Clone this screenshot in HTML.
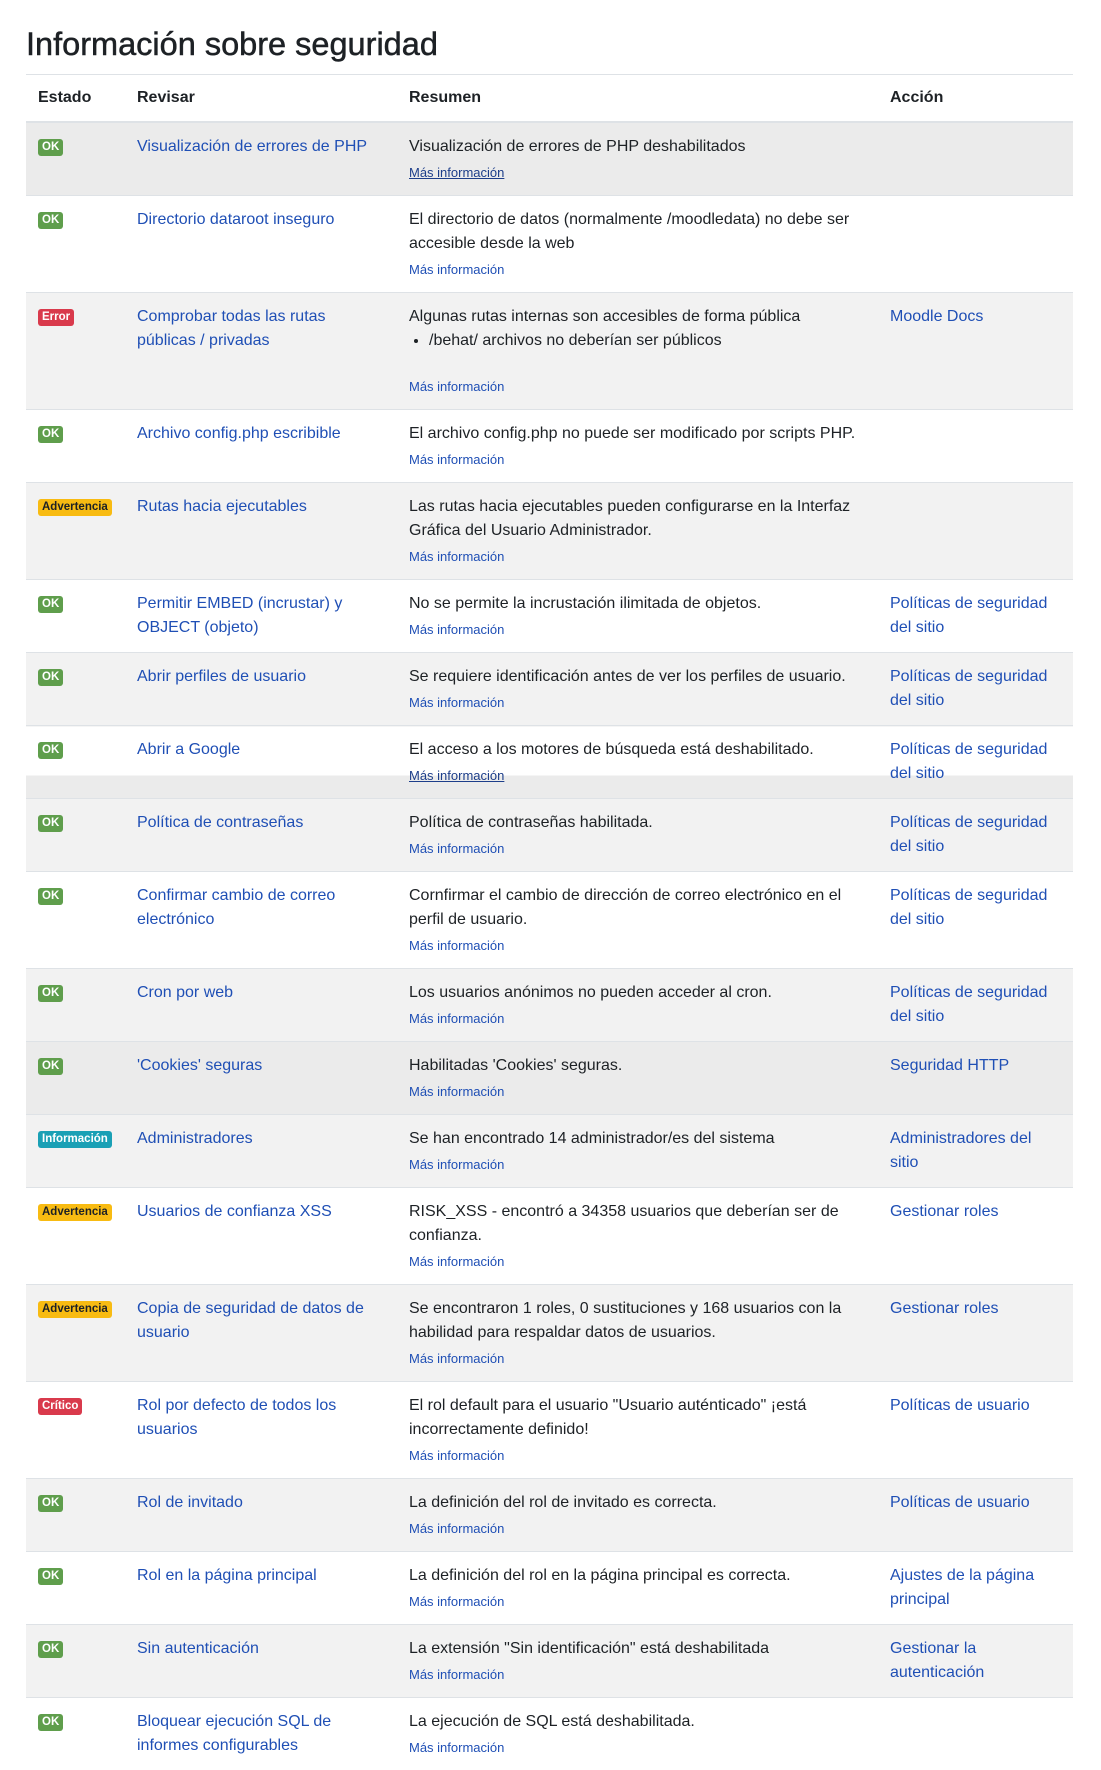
<!DOCTYPE html>
<html><head><meta charset="utf-8">
<style>
html,body{margin:0;padding:0;background:#fff;}
body{width:1101px;height:1764px;overflow:hidden;font-family:"Liberation Sans",Arial,sans-serif;color:#1d2125;font-size:16px;}
h2{margin:0;position:absolute;left:26px;top:24px;font-size:32.5px;font-weight:normal;line-height:40px;-webkit-text-stroke:0.5px #1d2125;color:#1d2125;}
table{position:absolute;left:26px;top:74px;width:1047px;border-collapse:collapse;table-layout:fixed;}
th,td{padding:12px 12px;text-align:left;vertical-align:top;line-height:24px;}
th{padding:11px 12px;font-weight:bold;border-top:1px solid #dee2e6;border-bottom:2px solid #dee2e6;font-size:16px;}
td{border-top:1px solid #dee2e6;}
tr.g td{background:#f2f2f2;}
tr.h td{background:#ebebeb;}
a{color:#1f4fb5;text-decoration:none;white-space:nowrap;}
.m{display:block;font-size:13px;line-height:20px;margin-top:4px;color:#1f4fb5;}
.mu{color:#1d3e8a;text-decoration:underline;}
.b{display:inline-block;font-size:11.5px;font-weight:bold;line-height:17px;padding:0 4px;border-radius:3px;color:#fff;margin-top:4px;vertical-align:top;}
.ok{background:#5f9e4c;}
.er{background:#d93a4c;}
.wa{background:#f8bb12;color:#1d2125;}
.in{background:#1aa0b5;}
ul{margin:0 0 24px 0;padding-left:20px;}
</style></head><body>
<h2>Información sobre seguridad</h2>
<table>
<colgroup><col style="width:99px"><col style="width:272px"><col style="width:481px"><col style="width:195px"></colgroup>
<tr><th>Estado</th><th>Revisar</th><th>Resumen</th><th>Acción</th></tr>
<tr class="h"><td><span class="b ok">OK</span></td><td><a>Visualización de errores de PHP</a></td><td>Visualización de errores de PHP deshabilitados<a class="m mu">Más información</a></td><td></td></tr>
<tr><td><span class="b ok">OK</span></td><td><a>Directorio dataroot inseguro</a></td><td>El directorio de datos (normalmente /moodledata) no debe ser<br>accesible desde la web<a class="m">Más información</a></td><td></td></tr>
<tr class="g"><td><span class="b er">Error</span></td><td><a>Comprobar todas las rutas<br>públicas / privadas</a></td><td>Algunas rutas internas son accesibles de forma pública<ul><li>/behat/ archivos no deberían ser públicos</li></ul><a class="m">Más información</a></td><td><a>Moodle Docs</a></td></tr>
<tr><td><span class="b ok">OK</span></td><td><a>Archivo config.php escribible</a></td><td>El archivo config.php no puede ser modificado por scripts PHP.<a class="m">Más información</a></td><td></td></tr>
<tr class="g"><td><span class="b wa">Advertencia</span></td><td><a>Rutas hacia ejecutables</a></td><td>Las rutas hacia ejecutables pueden configurarse en la Interfaz<br>Gráfica del Usuario Administrador.<a class="m">Más información</a></td><td></td></tr>
<tr><td><span class="b ok">OK</span></td><td><a>Permitir EMBED (incrustar) y<br>OBJECT (objeto)</a></td><td>No se permite la incrustación ilimitada de objetos.<a class="m">Más información</a></td><td><a>Políticas de seguridad<br>del sitio</a></td></tr>
<tr class="g"><td><span class="b ok">OK</span></td><td><a>Abrir perfiles de usuario</a></td><td>Se requiere identificación antes de ver los perfiles de usuario.<a class="m">Más información</a></td><td><a>Políticas de seguridad<br>del sitio</a></td></tr>
<tr class="p"><td style="background:linear-gradient(#fff 0 49px,#ebebeb 49px)"><span class="b ok">OK</span></td><td style="background:linear-gradient(#fff 0 49px,#ebebeb 49px)"><a>Abrir a Google</a></td><td style="background:linear-gradient(#fff 0 49px,#ebebeb 49px)">El acceso a los motores de búsqueda está deshabilitado.<a class="m mu">Más información</a></td><td style="background:linear-gradient(#fff 0 49px,#ebebeb 49px)"><a>Políticas de seguridad<br>del sitio</a></td></tr>
<tr class="g"><td><span class="b ok">OK</span></td><td><a>Política de contraseñas</a></td><td>Política de contraseñas habilitada.<a class="m">Más información</a></td><td><a>Políticas de seguridad<br>del sitio</a></td></tr>
<tr><td><span class="b ok">OK</span></td><td><a>Confirmar cambio de correo<br>electrónico</a></td><td>Cornfirmar el cambio de dirección de correo electrónico en el<br>perfil de usuario.<a class="m">Más información</a></td><td><a>Políticas de seguridad<br>del sitio</a></td></tr>
<tr class="g"><td><span class="b ok">OK</span></td><td><a>Cron por web</a></td><td>Los usuarios anónimos no pueden acceder al cron.<a class="m">Más información</a></td><td><a>Políticas de seguridad<br>del sitio</a></td></tr>
<tr class="h"><td><span class="b ok">OK</span></td><td><a>'Cookies' seguras</a></td><td>Habilitadas 'Cookies' seguras.<a class="m">Más información</a></td><td><a>Seguridad HTTP</a></td></tr>
<tr class="g"><td><span class="b in">Información</span></td><td><a>Administradores</a></td><td>Se han encontrado 14 administrador/es del sistema<a class="m">Más información</a></td><td><a>Administradores del<br>sitio</a></td></tr>
<tr><td><span class="b wa">Advertencia</span></td><td><a>Usuarios de confianza XSS</a></td><td>RISK_XSS - encontró a 34358 usuarios que deberían ser de<br>confianza.<a class="m">Más información</a></td><td><a>Gestionar roles</a></td></tr>
<tr class="g"><td><span class="b wa">Advertencia</span></td><td><a>Copia de seguridad de datos de<br>usuario</a></td><td>Se encontraron 1 roles, 0 sustituciones y 168 usuarios con la<br>habilidad para respaldar datos de usuarios.<a class="m">Más información</a></td><td><a>Gestionar roles</a></td></tr>
<tr><td><span class="b er">Crítico</span></td><td><a>Rol por defecto de todos los<br>usuarios</a></td><td>El rol default para el usuario "Usuario auténticado" ¡está<br>incorrectamente definido!<a class="m">Más información</a></td><td><a>Políticas de usuario</a></td></tr>
<tr class="g"><td><span class="b ok">OK</span></td><td><a>Rol de invitado</a></td><td>La definición del rol de invitado es correcta.<a class="m">Más información</a></td><td><a>Políticas de usuario</a></td></tr>
<tr><td><span class="b ok">OK</span></td><td><a>Rol en la página principal</a></td><td>La definición del rol en la página principal es correcta.<a class="m">Más información</a></td><td><a>Ajustes de la página<br>principal</a></td></tr>
<tr class="g"><td><span class="b ok">OK</span></td><td><a>Sin autenticación</a></td><td>La extensión "Sin identificación" está deshabilitada<a class="m">Más información</a></td><td><a>Gestionar la<br>autenticación</a></td></tr>
<tr><td><span class="b ok">OK</span></td><td><a>Bloquear ejecución SQL de<br>informes configurables</a></td><td>La ejecución de SQL está deshabilitada.<a class="m">Más información</a></td><td></td></tr>
</table>
</body></html>
